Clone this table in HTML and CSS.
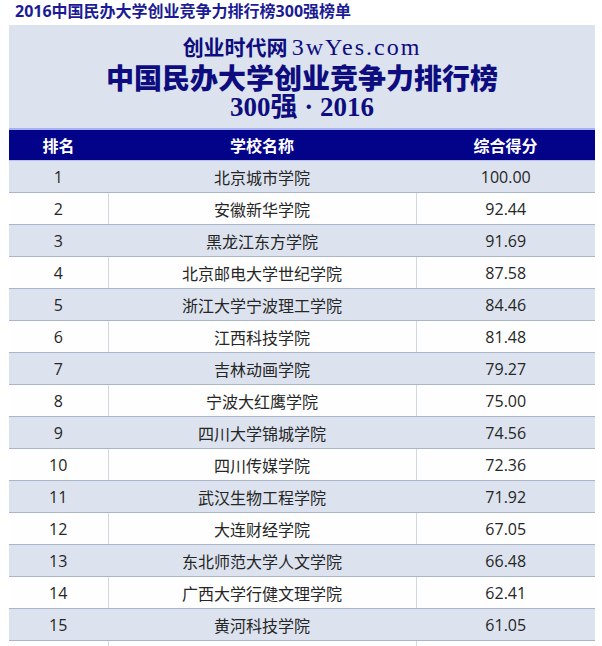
FILE: index.html
```html
<!DOCTYPE html>
<html lang="zh-CN">
<head>
<meta charset="utf-8">
<title>2016中国民办大学创业竞争力排行榜300强榜单</title>
<link rel="stylesheet" href="styles.css">
</head>
<body>
<h1 class="page-title">2016中国民办大学创业竞争力排行榜300强榜单</h1>
<div class="board">
  <div class="board-head">
    <div class="brand"><span class="brand-cn">创业时代网</span> <span class="brand-url">3wYes.com</span></div>
    <div class="big-title">中国民办大学创业竞争力排行榜</div>
    <div class="sub-title">300强 · 2016</div>
  </div>
  <table class="rank">
    <colgroup><col class="c1"><col class="c2"><col class="c3"></colgroup>
    <thead>
      <tr><th>排名</th><th>学校名称</th><th>综合得分</th></tr>
    </thead>
    <tbody>
      <tr><td>1</td><td>北京城市学院</td><td>100.00</td></tr>
      <tr><td>2</td><td>安徽新华学院</td><td>92.44</td></tr>
      <tr><td>3</td><td>黑龙江东方学院</td><td>91.69</td></tr>
      <tr><td>4</td><td>北京邮电大学世纪学院</td><td>87.58</td></tr>
      <tr><td>5</td><td>浙江大学宁波理工学院</td><td>84.46</td></tr>
      <tr><td>6</td><td>江西科技学院</td><td>81.48</td></tr>
      <tr><td>7</td><td>吉林动画学院</td><td>79.27</td></tr>
      <tr><td>8</td><td>宁波大红鹰学院</td><td>75.00</td></tr>
      <tr><td>9</td><td>四川大学锦城学院</td><td>74.56</td></tr>
      <tr><td>10</td><td>四川传媒学院</td><td>72.36</td></tr>
      <tr><td>11</td><td>武汉生物工程学院</td><td>71.92</td></tr>
      <tr><td>12</td><td>大连财经学院</td><td>67.05</td></tr>
      <tr><td>13</td><td>东北师范大学人文学院</td><td>66.48</td></tr>
      <tr><td>14</td><td>广西大学行健文理学院</td><td>62.41</td></tr>
      <tr><td>15</td><td>黄河科技学院</td><td>61.05</td></tr>
      <tr class="cut"><td></td><td></td><td></td></tr>
    </tbody>
  </table>
</div>
</body>
</html>
```
FILE: styles.css
```css
html, body {
  margin: 0;
  padding: 0;
  background: #ffffff;
}
body {
  font-family: "Open Sans", "Noto Sans CJK SC", sans-serif;
  overflow: hidden;
}
.page-title {
  margin: 0;
  padding-left: 15px;
  height: 22px;
  line-height: 22px;
  font-size: 16px;
  font-weight: bold;
  color: #1b1b96;
  font-family: "Open Sans", "Noto Sans CJK SC", sans-serif;
  white-space: nowrap;
}
.board {
  margin: 3px 0 0 9px;
  width: 586px;
  background: #dde3ee;
}
.board-head {
  padding: 8px 0 7px;
  border-bottom: 2px solid #a7b0f2;
  text-align: center;
  color: #0d0d80;
}
.brand {
  height: 27px;
  line-height: 27px;
  white-space: nowrap;
}
.brand-cn {
  font-family: "Noto Sans CJK SC", sans-serif;
  font-size: 21px;
  font-weight: bold;
}
.brand-url {
  font-family: "Liberation Serif", serif;
  font-size: 24px;
  font-weight: normal;
  letter-spacing: 2px;
}
.big-title {
  height: 34px;
  line-height: 34px;
  font-family: "Noto Sans CJK SC", sans-serif;
  font-size: 28px;
  font-weight: 900;
  white-space: nowrap;
}
.sub-title {
  height: 27px;
  line-height: 27px;
  font-family: "Liberation Serif", "Noto Sans CJK SC", serif;
  font-size: 27px;
  font-weight: bold;
  white-space: nowrap;
}
.rank {
  width: 586px;
  border-collapse: collapse;
  table-layout: fixed;
}
.c1 { width: 99px; }
.c2 { width: 308px; }
.c3 { width: 179px; }
.rank th {
  background: #03038a;
  color: #ffffff;
  font-size: 16px;
  font-weight: bold;
  height: 30px;
  padding: 0;
  border-bottom: 1px solid #b9c2ea;
  text-align: center;
}
.rank td {
  height: 31px;
  padding: 0;
  font-size: 16px;
  color: #262626;
  text-align: center;
  border-bottom: 1px solid #a9b5c8;
}
.rank tbody tr:nth-child(odd) td {
  background: #dce3ee;
}
.rank tbody tr:nth-child(even) td {
  background: #fefefe;
}
.rank tbody tr:nth-child(even) td + td {
  border-left: 1px solid #d2d7de;
}
.rank tbody tr:nth-child(odd) td + td {
  border-left: 1px solid #dce3ee;
}
```
